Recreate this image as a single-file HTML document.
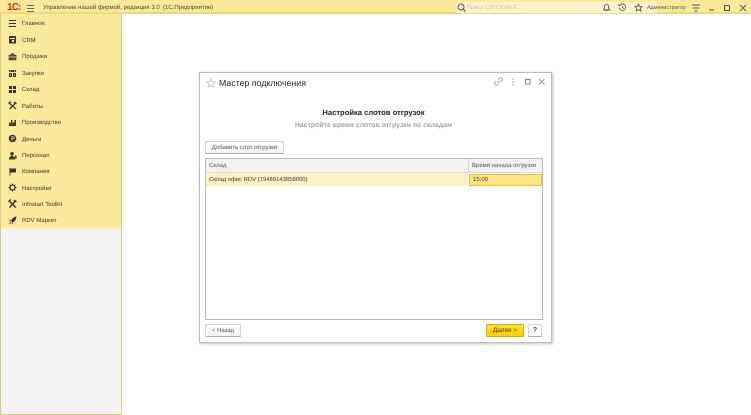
<!DOCTYPE html>
<html><head><meta charset="utf-8"><style>
html,body{margin:0;padding:0;width:751px;height:415px;overflow:hidden;background:#fff}
body{font-family:"Liberation Sans",sans-serif;position:relative;color:#333;text-rendering:geometricPrecision}
div,span,svg{position:absolute;box-sizing:border-box}
.t{white-space:nowrap;line-height:10px;height:10px;font-size:6px;margin-top:1px;text-rendering:geometricPrecision}
.m{left:22px;color:#3d3a2c;font-size:6px}
.i{left:7.5px;width:9px;height:9px}
</style></head><body>
<div style="left:0;top:0;width:751px;height:14px;background:#fbe89a;border-bottom:2px solid #efd97a"></div>
<div style="left:0;top:14px;width:122px;height:401px;background:#f2f2f2;border:1px solid #d4cd8e;border-width:0 1px 1px 1px"></div>
<div style="left:1px;top:14px;width:120px;height:215px;background:#fbe99c;border-bottom:2px solid #fdf0b4"></div>

<!-- logo -->
<div class="t" style="left:7px;top:2px;color:#d8291c;font-weight:bold;font-size:10px;letter-spacing:-.8px">1С:</div>
<svg style="left:26.5px;top:5px;width:7px;height:7px" viewBox="0 0 7 7"><path d="M0 .5H7M0 3.5H7M0 6.5H7" stroke="#666" stroke-width="1"/></svg>
<div class="t" style="left:43px;top:2px;font-size:6px;color:#4f4830">Управление нашей фирмой, редакция 3.0&nbsp; (1С:Предприятие)</div>

<!-- search -->
<div style="left:456px;top:2px;width:201px;height:11px;background:#fdf3cf"></div>
<svg style="left:457px;top:3px;width:9px;height:9px" viewBox="0 0 9 9"><circle cx="4" cy="4" r="3" fill="none" stroke="#555" stroke-width="1"/><path d="M6 6L8.5 8.5" stroke="#555" stroke-width="1.2"/></svg>
<div class="t" style="left:467px;top:2px;color:#c9c3a8;font-size:6px">Поиск Ctrl+Shift+F</div>

<!-- top right icons -->
<svg style="left:601.5px;top:3px;width:9px;height:9px" viewBox="0 0 11 11"><path d="M5.5 1.5C3.5 1.5 3 3 3 4.5V6.5L1.5 8.5H9.5L8 6.5V4.5C8 3 7.5 1.5 5.5 1.5ZM4.5 9.5H6.5" fill="none" stroke="#555" stroke-width="1"/></svg>
<svg style="left:617.5px;top:3px;width:9px;height:9px" viewBox="0 0 11 11"><path d="M2 3A4 4 0 1 1 1.5 6M5.5 3.5V5.7L7 6.7M1 1.5V3.5H3" fill="none" stroke="#555" stroke-width="1"/></svg>
<svg style="left:633.5px;top:3px;width:9px;height:9px" viewBox="0 0 11 11"><path d="M5.5 1.2L6.8 4.2L10 4.5L7.6 6.6L8.3 9.8L5.5 8.1L2.7 9.8L3.4 6.6L1 4.5L4.2 4.2Z" fill="none" stroke="#555" stroke-width="1"/></svg>
<div class="t" style="left:647px;top:2px;font-size:5.4px;color:#555">Администратор</div>
<svg style="left:692px;top:4px;width:8px;height:8px" viewBox="0 0 8 8"><path d="M0 1H8M1 4H7M2.5 7H5.5" stroke="#555" stroke-width="1"/></svg>
<svg style="left:709px;top:9px;width:6px;height:2px" viewBox="0 0 6 2"><path d="M0 1H5" stroke="#555" stroke-width="1"/></svg>
<svg style="left:723px;top:4px;width:8px;height:8px" viewBox="0 0 8 8"><rect x="1.5" y="1.5" width="5" height="5" fill="none" stroke="#555" stroke-width="1"/></svg>
<svg style="left:739px;top:4px;width:8px;height:8px" viewBox="0 0 8 8"><path d="M1 1L7 7M7 1L1 7" stroke="#555" stroke-width=".9"/></svg>

<!-- menu -->
<svg class="i" style="top:19px" viewBox="0 0 9 9"><path d="M1 1.5H8M1 4.5H8M1 7.5H8" stroke="#333" stroke-width="1.1"/></svg>
<div class="t m" style="top:18px">Главное</div>
<svg class="i" style="top:35px" viewBox="0 0 9 9"><path d="M1 1H8V8.5H1Z" fill="#3a3a32"/><rect x="2" y="3" width="5" height="1" fill="#fbe99c"/><rect x="4" y="5" width="2" height="2" fill="#fbe99c"/></svg>
<div class="t m" style="top:35px">CRM</div>
<svg class="i" style="top:52px" viewBox="0 0 9 9"><path d="M3.5 3V1.5H5.5V3M1 3H8V8H1Z" fill="#55503a" stroke="#3a3a32" stroke-width=".6"/><path d="M1 5H8" stroke="#fbe99c" stroke-width=".7"/></svg>
<div class="t m" style="top:51px">Продажи</div>
<svg class="i" style="top:69px" viewBox="0 0 9 9"><path d="M1 1H8V3H1ZM1 4H4V8H1ZM5 4H8V8H5Z" fill="#3a3a32"/><path d="M2.5 1V3M6.5 1V3M2.5 5V7M6.5 5V7" stroke="#fbe99c" stroke-width=".6"/></svg>
<div class="t m" style="top:68px">Закупки</div>
<svg class="i" style="top:85px" viewBox="0 0 9 9"><path d="M1 1H4V4H1ZM5 1H8V4H5ZM1 5H4V8H1ZM5 5H8V8H5Z" fill="#33332b"/></svg>
<div class="t m" style="top:84px">Склад</div>
<svg class="i" style="top:101px" viewBox="0 0 9 9"><path d="M1 2L8 8M8 1.5L1.5 8" stroke="#3a3a32" stroke-width="1.3"/><path d="M.5 2.5L3 .5M6 1L8.5 3" stroke="#3a3a32" stroke-width="1.2"/></svg>
<div class="t m" style="top:101px">Работы</div>
<svg class="i" style="top:118px" viewBox="0 0 9 9"><path d="M1 8V4L3 5.5V2H4.5V5.5L6.5 4V2H8V8Z" fill="#3a3a32"/></svg>
<div class="t m" style="top:117px">Производство</div>
<svg class="i" style="top:134px" viewBox="0 0 9 9"><circle cx="4.5" cy="4.5" r="3.8" fill="#3a3a32"/><path d="M4 2.5V6.5M4 2.8H5.3A1 1 0 0 1 5.3 4.8H3" fill="none" stroke="#fbe99c" stroke-width=".7"/></svg>
<div class="t m" style="top:134px">Деньги</div>
<svg class="i" style="top:151px" viewBox="0 0 9 9"><circle cx="4" cy="2.8" r="1.8" fill="#3a3a32"/><path d="M1 8.5V6.5L3 5H5L7 6.5V8.5Z" fill="#3a3a32"/><path d="M6.5 4.5H8.5V8H7.5" fill="#3a3a32"/></svg>
<div class="t m" style="top:150px">Персонал</div>
<svg class="i" style="top:167px" viewBox="0 0 9 9"><path d="M2 1V8.5" stroke="#33332b" stroke-width="1"/><path d="M2 1.5H8V5.5H2Z" fill="#33332b"/></svg>
<div class="t m" style="top:166px">Компания</div>
<svg class="i" style="top:183px" viewBox="0 0 9 9"><circle cx="4.5" cy="4.5" r="2.5" fill="none" stroke="#3a3a32" stroke-width="1.3"/><path d="M4.5 .5V2M4.5 7V8.5M.5 4.5H2M7 4.5H8.5M1.7 1.7L2.7 2.7M6.3 6.3L7.3 7.3M7.3 1.7L6.3 2.7M2.7 6.3L1.7 7.3" stroke="#3a3a32" stroke-width="1"/></svg>
<div class="t m" style="top:183px">Настройки</div>
<svg class="i" style="top:199px" viewBox="0 0 9 9"><path d="M1 2L8 8.5M8 1.5L1.5 8.5" stroke="#33332b" stroke-width="1.4"/><path d="M.5 2.5L3 .5M6 1L8.5 3" stroke="#33332b" stroke-width="1.3"/></svg>
<div class="t m" style="top:199px">Infostart Toolkit</div>
<svg class="i" style="top:216px" viewBox="0 0 9 9"><path d="M8.5 .5C6 .8 4 2.5 3 5L4.5 6.5C7 5.5 8.2 3 8.5 .5ZM1 4.5L3 3.5L2.5 5.5ZM4 7L5.5 6.5L4.5 8.5ZM1 8.5L2.5 6L3.5 7Z" fill="#33332b"/></svg>
<div class="t m" style="top:215px">RDV Маркет</div>

<!-- dialog -->
<div style="left:199px;top:72px;width:353px;height:271px;background:#fff;border:1px solid #bdbdbd;box-shadow:1px 1px 3px rgba(0,0,0,.25)"></div>
<svg style="left:206px;top:78px;width:10px;height:10px" viewBox="0 0 10 10"><path d="M5 .8L6.2 3.7L9.3 4L7 6L7.7 9.1L5 7.5L2.3 9.1L3 6L.7 4L3.8 3.7Z" fill="none" stroke="#c4c4c4" stroke-width=".8"/></svg>
<div class="t" style="left:219px;top:77px;font-size:8.8px;height:11px;line-height:11px;color:#222">Мастер подключения</div>
<svg style="left:494px;top:77px;width:9px;height:9px" viewBox="0 0 9 9"><path d="M3.5 5.5L5.5 3.5M4 2.5L5.3 1.2A1.4 1.4 0 0 1 7.8 3.7L6.5 5M5 6.5L3.7 7.8A1.4 1.4 0 0 1 1.2 5.3L2.5 4" fill="none" stroke="#888" stroke-width=".7"/></svg>
<svg style="left:511px;top:78px;width:4px;height:8px" viewBox="0 0 4 8"><path d="M2 .5V1.8M2 3.3V4.6M2 6.1V7.4" stroke="#777" stroke-width="1"/></svg>
<svg style="left:524px;top:78px;width:8px;height:8px" viewBox="0 0 8 8"><rect x="1.5" y="1.5" width="4.6" height="4.6" fill="none" stroke="#777" stroke-width=".9"/></svg>
<svg style="left:538px;top:78px;width:8px;height:8px" viewBox="0 0 8 8"><path d="M1 1L6.5 6.5M6.5 1L1 6.5" stroke="#777" stroke-width=".8"/></svg>

<div class="t" style="left:199px;width:349px;text-align:center;top:107px;font-weight:bold;font-size:7.6px;color:#222">Настройка слотов отгрузок</div>
<div class="t" style="left:199px;width:349px;text-align:center;top:120px;font-weight:bold;font-size:6.9px;color:#a3a3a3">Настройте время слотов отгрузки по складам</div>

<div style="left:205px;top:141px;width:79px;height:13px;background:linear-gradient(#fff,#f3f3f3);border:1px solid #d5d5d5;border-bottom-color:#aaa;border-radius:1px"></div>
<div class="t" style="left:205px;width:79px;text-align:center;top:142px;color:#555;font-size:6px">Добавить слот отгрузки</div>

<!-- table -->
<div style="left:205px;top:158px;width:338px;height:162px;background:#fff;border:1px solid #b8b8b8"></div>
<div style="left:206px;top:159px;width:336px;height:14px;background:#f2f2f2;border-bottom:1px solid #dcdcdc"></div>
<div style="left:468px;top:159px;width:1px;height:14px;background:#d5d5d5"></div>
<div style="left:206px;top:173px;width:262px;height:13px;background:#fdf2c3"></div>
<div style="left:469px;top:174px;width:73px;height:12px;background:#fde58a;border:1px solid #e8c31e"></div>
<div class="t" style="left:209px;top:160px;color:#555">Склад</div>
<div class="t" style="left:472px;top:160px;color:#555;font-size:6px">Время начала отгрузки</div>
<div class="t" style="left:209px;top:174px;color:#3d3a2c;font-size:5.9px">Склад офис RDV (19489143858000)</div>
<div class="t" style="left:473px;top:174px;color:#3d3a2c">15:00</div>

<!-- buttons -->
<div style="left:205px;top:324px;width:36px;height:13px;background:linear-gradient(#fff,#f3f3f3);border:1px solid #d5d5d5;border-bottom-color:#aaa;border-radius:1px"></div>
<div class="t" style="left:205px;width:36px;text-align:center;top:325px;color:#555">&lt; Назад</div>
<div style="left:486px;top:324px;width:38px;height:13px;background:linear-gradient(#ffe033,#fcd200);border:1px solid #d6b000;border-radius:1px"></div>
<div class="t" style="left:486px;width:38px;text-align:center;top:325px;color:#3d3510;font-size:6.4px">Далее &gt;</div>
<div style="left:528px;top:324px;width:14px;height:13px;background:#fff;border:1px solid #d5d5d5;border-bottom-color:#aaa;border-radius:1px"></div>
<div class="t" style="left:528px;width:14px;text-align:center;top:325px;color:#333;font-weight:bold;font-size:7px">?</div>
</body></html>
